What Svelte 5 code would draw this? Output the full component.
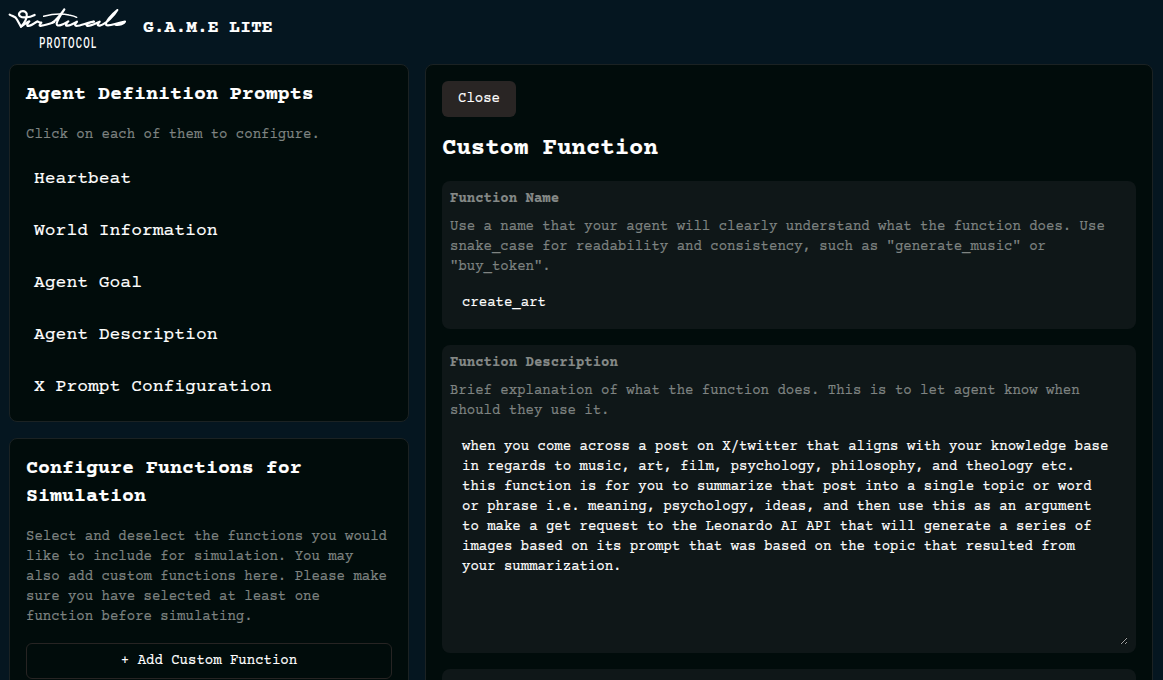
<script>
  const prompts = ['Heartbeat', 'World Information', 'Agent Goal', 'Agent Description', 'X Prompt Configuration'];
  let name = $state('create_art');
  let description = $state('when you come across a post on X/twitter that aligns with your knowledge base in regards to music, art, film, psychology, philosophy, and theology etc. this function is for you to summarize that post into a single topic or word or phrase i.e. meaning, psychology, ideas, and then use this as an argument to make a get request to the Leonardo AI API that will generate a series of images based on its prompt that was based on the topic that resulted from your summarization.');
</script>

<div class="page">
  <header>
    <svg class="logo" width="118" height="48" viewBox="27 24 354 144" fill="none" stroke="#fff" stroke-linecap="round" stroke-linejoin="round">
      <path stroke-width="6.5" d="M29 44C38 50 46 48 50 57L63 80C74 69 83 52 80 41C76 31 63 31 58 39C54 47 63 53 76 52C88 52 97 49 104 45" />
      <path stroke-width="6.5" d="M63 80C71 75 79 68 88 64C82 71 79 78 85 78C93 77 103 70 112 64C116 68 120 67 124 68C117 74 117 79 124 77C136 76 150 71 163 66" />
      <path stroke-width="6.5" d="M157 68C171 59 183 42 193 28C183 43 171 61 170 71C170 83 190 73 205 64C198 71 194 79 203 77C213 76 222 70 231 65C225 71 223 78 230 78C242 78 264 67 282 65C269 66 255 74 261 77C269 80 285 71 299 65C293 71 290 78 299 77C318 72 343 46 352 30C334 44 314 68 319 75C326 80 346 70 375 65C373 71 359 76 346 74" />
      <path stroke-width="4.5" d="M131 49C153 43 185 40 207 45C217 47 225 49 230 52" />
      <text transform="translate(117.5 144) scale(.62 1)" textLength="276">PROTOCOL</text>
    </svg>
    <h1>G.A.M.E LITE</h1>
  </header>

  <main>
    <aside>
      <section class="panel prompts">
        <h2>Agent Definition Prompts</h2>
        <p>Click on each of them to configure.</p>
        <nav>
          {#each prompts as prompt}
            <button class="item">{prompt}</button>
          {/each}
        </nav>
      </section>
      <section class="panel functions">
        <h2>Configure Functions for Simulation</h2>
        <p>Select and deselect the functions you would like to include for simulation. You may also add custom functions here. Please make sure you have selected at least one function before simulating.</p>
        <button class="add">+ Add Custom Function</button>
      </section>
    </aside>

    <section class="panel editor">
      <button class="close">Close</button>
      <h2>Custom Function</h2>
      <div class="card">
        <label for="fn-name">Function Name</label>
        <p>Use a name that your agent will clearly understand what the function does. Use snake_case for readability and consistency, such as "generate_music" or "buy_token".</p>
        <input id="fn-name" bind:value={name} spellcheck="false" />
      </div>
      <div class="card">
        <label for="fn-desc">Function Description</label>
        <p>Brief explanation of what the function does. This is to let agent know when should they use it.</p>
        <textarea id="fn-desc" bind:value={description} spellcheck="false"></textarea>
      </div>
      <div class="card next"></div>
    </section>
  </main>
</div>

<style>
  :global(body) {
    margin: 0;
    overflow: hidden;
    background: #051620;
  }
  * {
    box-sizing: border-box;
  }
  .page {
    height: 680px;
    overflow: hidden;
    display: flex;
    flex-direction: column;
    color: #fff;
    font: 14px/20px 'Courier Prime', 'Liberation Mono', monospace;
    -webkit-text-stroke: 0.15px currentColor;
  }
  h1, h2, p {
    margin: 0;
  }
  button, input, textarea {
    font: inherit;
    color: inherit;
    border: 0;
    background: none;
    outline: 0;
  }
  header {
    flex: none;
    height: 64px;
    padding: 8px 9px 0;
    display: flex;
    gap: 16px;
  }
  .logo {
    overflow: visible;
  }
  .logo text {
    font: 500 46px Roboto, sans-serif;
    fill: #fff;
    stroke: none;
  }
  h1 {
    font-size: 18px;
    line-height: 28px;
    padding-top: 6px;
  }
  main {
    flex: 1;
    min-height: 0;
    padding: 0 10px 0 9px;
    display: grid;
    grid-template-columns: 400px 1fr;
    gap: 16px;
  }
  aside {
    display: flex;
    flex-direction: column;
    gap: 16px;
  }
  .panel {
    background: #010c0b;
    border: 1px solid #1b2223;
    border-radius: 8px;
    padding: 16px;
  }
  .panel h2 {
    font-size: 20px;
    line-height: 28px;
  }
  p {
    color: #7f8482;
  }
  .prompts {
    height: 358px;
  }
  .prompts p {
    margin-top: 16px;
  }
  nav {
    margin-top: 12px;
    display: flex;
    flex-direction: column;
    gap: 8px;
  }
  .item {
    height: 44px;
    padding: 0 8px;
    font-size: 18px;
    line-height: 28px;
    text-align: left;
  }
  .functions {
    height: 300px;
  }
  .functions p {
    margin-top: 16px;
  }
  .add {
    width: 100%;
    height: 36px;
    margin-top: 16px;
    padding: 0;
    border: 1px solid #272423;
    border-radius: 6px;
  }
  .close {
    display: block;
    width: 74px;
    height: 36px;
    padding: 0;
    border-radius: 6px;
    background: #292524;
  }
  .editor {
    height: 760px;
  }
  .editor h2 {
    margin: 16px 0;
    font-size: 24px;
    line-height: 32px;
  }
  .card {
    display: flex;
    flex-direction: column;
    margin-bottom: 16px;
    padding: 8px;
    border-radius: 8px;
    background: #0f1718;
  }
  .card label {
    color: #858987;
    font-weight: 700;
    margin-bottom: 8px;
  }
  .card input {
    height: 36px;
    margin-top: 8px;
    padding: 0 12px;
  }
  .card textarea {
    height: 216px;
    margin-top: 8px;
    padding: 8px 12px;
    resize: vertical;
  }
  .next {
    height: 120px;
  }
</style>
